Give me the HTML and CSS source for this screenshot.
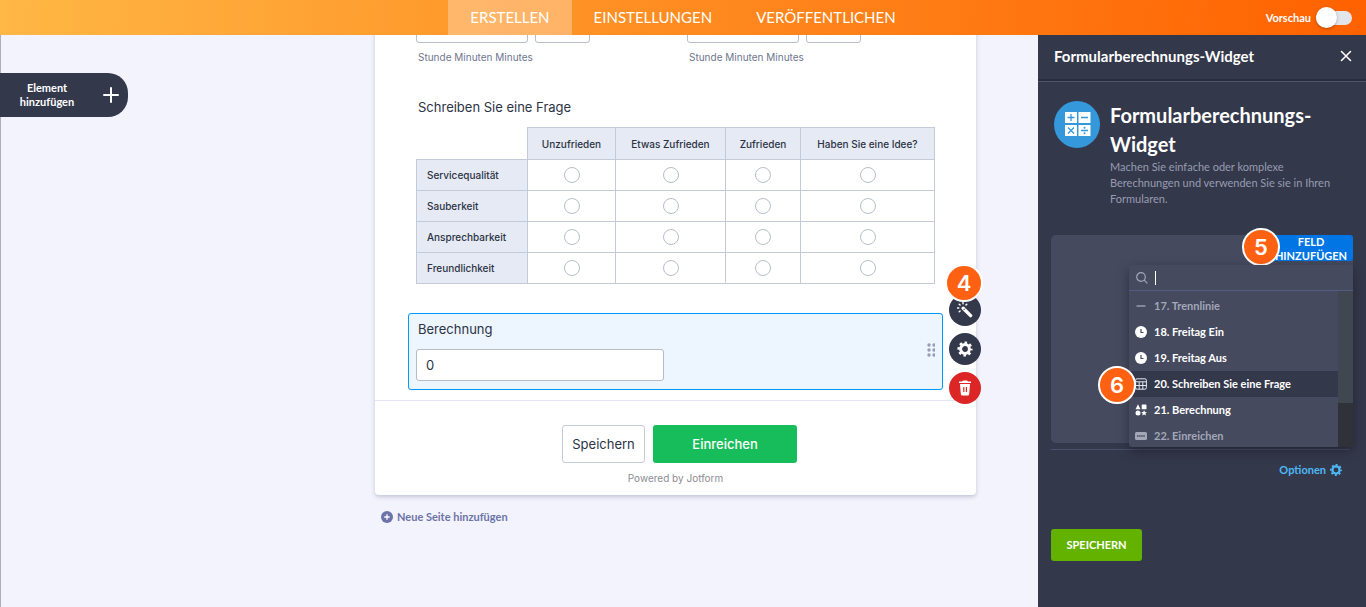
FILE: index.html
```html
<!DOCTYPE html>
<html lang="de">
<head>
    <meta charset="UTF-8">
    <meta name="viewport" content="width=device-width, initial-scale=1.0">
    <title>Formularberechnungs-Widget</title>
    <link rel="stylesheet" href="styles.css">
</head>
<body>
    <header class="topbar">
        <nav class="tabs">
            <a class="tab active" href="#">ERSTELLEN</a>
            <a class="tab" href="#">EINSTELLUNGEN</a>
            <a class="tab" href="#">VERÖFFENTLICHEN</a>
        </nav>
        <div class="preview">
            <label for="preview">Vorschau</label>
            <input type="checkbox" id="preview" class="switch">
        </div>
    </header>

    <div class="main">
        <main class="workspace">
            <button class="add-element">
                <span>Element hinzufügen</span>
                <svg width="16" height="16" viewBox="0 0 16 16"><path d="M8 1v14M1 8h14" stroke="#fff" stroke-width="2" stroke-linecap="round"/></svg>
            </button>

            <div class="column">
                <form class="form" onsubmit="return false">
                    <div class="fields">
                        <div class="times">
                            <div class="time">
                                <div class="time-inputs">
                                    <input type="text" id="time1" class="box hours">
                                    <input type="text" class="box minutes" aria-label="Minuten">
                                </div>
                                <label for="time1">Stunde Minuten Minutes</label>
                            </div>
                            <div class="time">
                                <div class="time-inputs">
                                    <input type="text" id="time2" class="box hours">
                                    <input type="text" class="box minutes" aria-label="Minuten">
                                </div>
                                <label for="time2">Stunde Minuten Minutes</label>
                            </div>
                        </div>

                        <div class="question">Schreiben Sie eine Frage</div>
                        <table class="matrix">
                            <thead>
                                <tr>
                                    <td class="row-name"></td>
                                    <th class="col-a">Unzufrieden</th>
                                    <th class="col-b">Etwas Zufrieden</th>
                                    <th class="col-c">Zufrieden</th>
                                    <th>Haben Sie eine Idee?</th>
                                </tr>
                            </thead>
                            <tbody>
                                <tr>
                                    <th>Servicequalität</th>
                                    <td><input type="radio" name="r1" aria-label="Unzufrieden"></td>
                                    <td><input type="radio" name="r1" aria-label="Etwas Zufrieden"></td>
                                    <td><input type="radio" name="r1" aria-label="Zufrieden"></td>
                                    <td><input type="radio" name="r1" aria-label="Haben Sie eine Idee?"></td>
                                </tr>
                                <tr>
                                    <th>Sauberkeit</th>
                                    <td><input type="radio" name="r2" aria-label="Unzufrieden"></td>
                                    <td><input type="radio" name="r2" aria-label="Etwas Zufrieden"></td>
                                    <td><input type="radio" name="r2" aria-label="Zufrieden"></td>
                                    <td><input type="radio" name="r2" aria-label="Haben Sie eine Idee?"></td>
                                </tr>
                                <tr>
                                    <th>Ansprechbarkeit</th>
                                    <td><input type="radio" name="r3" aria-label="Unzufrieden"></td>
                                    <td><input type="radio" name="r3" aria-label="Etwas Zufrieden"></td>
                                    <td><input type="radio" name="r3" aria-label="Zufrieden"></td>
                                    <td><input type="radio" name="r3" aria-label="Haben Sie eine Idee?"></td>
                                </tr>
                                <tr>
                                    <th>Freundlichkeit</th>
                                    <td><input type="radio" name="r4" aria-label="Unzufrieden"></td>
                                    <td><input type="radio" name="r4" aria-label="Etwas Zufrieden"></td>
                                    <td><input type="radio" name="r4" aria-label="Zufrieden"></td>
                                    <td><input type="radio" name="r4" aria-label="Haben Sie eine Idee?"></td>
                                </tr>
                            </tbody>
                        </table>
                    </div>

                    <div class="calc">
                        <div class="calc-field">
                            <label for="calc">Berechnung</label>
                            <input type="text" id="calc" class="box" value="0">
                        </div>
                        <svg class="grip" width="8" height="14" viewBox="0 0 8 14" fill="#979db5"><circle cx="2" cy="2" r="1.7"/><circle cx="7" cy="2" r="1.7"/><circle cx="2" cy="7" r="1.7"/><circle cx="7" cy="7" r="1.7"/><circle cx="2" cy="12" r="1.7"/><circle cx="7" cy="12" r="1.7"/></svg>
                        <div class="actions">
                            <span class="badge">4</span>
                            <button class="action" aria-label="Assistent">
                                <svg width="16" height="16" viewBox="0 0 16 16"><path d="M6.2 6.2L13.6 13.6" stroke="#fff" stroke-width="3.4" stroke-linecap="round"/><path d="M6.6 8L8 6.6" stroke="#34384b" stroke-width="1"/><path d="M6 .6v1.2M2.2 2.2l.9.9M.6 6h1.2M2.2 9.8l.9-.9M9.8 2.2l-.9.9" stroke="#fff" stroke-width="1.4" stroke-linecap="round"/></svg>
                            </button>
                            <button class="action" aria-label="Einstellungen">
                                <svg width="16" height="16" viewBox="0 0 16 16"><g fill="none" stroke="#fff"><circle cx="8" cy="8" r="4.4" stroke-width="3"/><circle cx="8" cy="8" r="6.4" stroke-width="2.4" stroke-dasharray="2.5 2.53" stroke-dashoffset="1.25"/></g></svg>
                            </button>
                            <button class="action delete" aria-label="Löschen">
                                <svg width="16" height="16" viewBox="0 0 16 16"><path fill="#fff" fill-rule="evenodd" d="M6 .5h4l1 1h3V3H2V1.500h3zM3 4h10l-.8 10a1.500 1.500 0 0 1-1.500 1.500H5.300A1.500 1.500 0 0 1 3.800 14zM6.200 7v5h1.200V7zM8.800 7v5H10V7z"/></svg>
                            </button>
                        </div>
                    </div>

                    <div class="submit">
                        <div class="submit-buttons">
                            <button class="save">Speichern</button>
                            <button class="send">Einreichen</button>
                        </div>
                        <div class="powered">Powered by Jotform</div>
                    </div>
                </form>
                <button class="new-page">
                    <svg width="12" height="12" viewBox="0 0 12 12"><circle cx="6" cy="6" r="6" fill="#6c73a8"/><path d="M6 3.300v5.400M3.300 6h5.400" stroke="#fff" stroke-width="1.300"/></svg>
                    Neue Seite hinzufügen
                </button>
            </div>
        </main>

        <aside class="panel">
            <div class="panel-head">
                <span>Formularberechnungs-Widget</span>
                <button class="close" aria-label="Schließen"><svg width="12" height="12" viewBox="0 0 12 12"><path d="M1.500 1.500l9 9M10.500 1.500l-9 9" stroke="#fff" stroke-width="1.600" stroke-linecap="round"/></svg></button>
            </div>

            <div class="intro">
                <svg class="logo" width="46" height="47" viewBox="0 0 46 47">
                    <ellipse cx="23" cy="23.500" rx="23" ry="23.500" fill="#3498db"/>
                    <path fill="#fff" d="M11 11h12v11H11zM24.500 11h12v11h-12zM11 24h12v11H11zM24.500 24h12v11h-12z"/>
                    <path d="M13.500 16.500h7M17 13v7M27 16.500h7M14 26.500l6 6M20 26.500l-6 6M27 29.500h7" stroke="#3498db" stroke-width="1.300"/>
                    <circle cx="30.500" cy="26.800" r="1" fill="#3498db"/><circle cx="30.500" cy="32.200" r="1" fill="#3498db"/>
                </svg>
                <div>
                    <h2>Formularberechnungs-Widget</h2>
                    <p>Machen Sie einfache oder komplexe Berechnungen und verwenden Sie sie in Ihren Formularen.</p>
                </div>
            </div>

            <div class="editor">
                <button class="add-field">FELD HINZUFÜGEN</button>
                <span class="badge badge-five">5</span>
                <div class="menu">
                    <div class="search">
                        <svg width="12" height="12" viewBox="0 0 12 12" fill="none" stroke="#a3a7b8" stroke-width="1.200"><circle cx="5" cy="5" r="4.300"/><path d="M8.200 8.200l3.200 3.200"/></svg>
                        <span class="caret"></span>
                        <input type="text" aria-label="Suche">
                    </div>
                    <div class="menu-body">
                        <div class="items">
                            <button class="item muted"><svg width="12" height="12" viewBox="0 0 12 12"><path d="M1.500 6h9" stroke="#a3a7b8" stroke-width="1.300"/></svg>17. Trennlinie</button>
                            <button class="item"><svg width="12" height="12" viewBox="0 0 12 12"><circle cx="6" cy="6" r="6" fill="#fff"/><path d="M6 3v3.500h2.500" fill="none" stroke="#454a5e" stroke-width="1.200"/></svg>18. Freitag Ein</button>
                            <button class="item"><svg width="12" height="12" viewBox="0 0 12 12"><circle cx="6" cy="6" r="6" fill="#fff"/><path d="M6 3v3.500h2.500" fill="none" stroke="#454a5e" stroke-width="1.200"/></svg>19. Freitag Aus</button>
                            <button class="item current"><svg width="12" height="12" viewBox="0 0 12 12" fill="none" stroke="#e4e6ef" stroke-width="1"><rect x=".6" y=".8" width="10.800" height="10.400" rx="1.500"/><path d="M.6 3.800h10.800M.6 7.500h10.800M4.200 3.800v7.400M7.800 3.800v7.400"/></svg>20. Schreiben Sie eine Frage</button>
                            <button class="item"><svg width="12" height="12" viewBox="0 0 12 12" fill="#fff"><path d="M3 .3L5.500 5.300H.5z"/><rect x="6.700" y=".5" width="4.800" height="4.800" rx=".6"/><circle cx="3" cy="9" r="2.500"/><path d="M9.100 6.300l.9 1.700 1.900.3-1.400 1.300.4 2-1.800-1-1.800 1 .4-2-1.400-1.300 1.900-.3z"/></svg>21. Berechnung</button>
                            <button class="item muted"><svg width="12" height="12" viewBox="0 0 12 12"><rect y="2" width="12" height="8" rx="1.500" fill="#a3a7b8"/><path d="M2 6h8" stroke="#5c6175" stroke-width="2" stroke-dasharray="1.500 .6"/></svg>22. Einreichen</button>
                        </div>
                        <div class="scroll"><div class="thumb"></div></div>
                    </div>
                    <span class="badge badge-six">6</span>
                </div>
            </div>

            <div class="options">
                <a href="#">Optionen
                    <svg width="12" height="12" viewBox="0 0 16 16"><g fill="none" stroke="#4cb8f6"><circle cx="8" cy="8" r="4.800" stroke-width="3"/><circle cx="8" cy="8" r="6.800" stroke-width="2.400" stroke-dasharray="2.670 2.670" stroke-dashoffset="1.330"/></g></svg>
                </a>
            </div>

            <button class="panel-save">SPEICHERN</button>
        </aside>
    </div>
</body>
</html>
```
FILE: styles.css
```css
*{
    box-sizing: border-box;
}
body{
    margin: 0;
    height: 100vh;
    display: flex;
    flex-direction: column;
    overflow: hidden;
    font-family: Lato, sans-serif;
    color: #2c3345;
}
button, input{
    font-family: inherit;
    margin: 0;
}
button{
    border: none;
    padding: 0;
    cursor: pointer;
}
svg{
    display: block;
    flex: none;
}

/* top bar */
.topbar{
    display: grid;
    grid-template-columns: 1fr auto 1fr;
    height: 35px;
    background: linear-gradient(95deg, #ffb745, #ff9427 40%, #ff6100);
}
.tabs{
    grid-column: 2;
    display: flex;
}
.tab{
    display: flex;
    align-items: center;
    padding: 0 22px 2px;
    font-size: 15px;
    color: #fff;
    text-decoration: none;
}
.tab.active{
    background: rgba(255, 255, 255, 0.3);
}
.preview{
    display: flex;
    align-items: center;
    justify-content: flex-end;
    gap: 5px;
    padding-right: 14px;
    font-size: 11px;
    font-weight: bold;
    color: #fff;
}
.switch{
    appearance: none;
    display: flex;
    align-items: center;
    width: 36px;
    height: 14px;
    border-radius: 7px;
    background: #e3e5ed;
}
.switch::before{
    content: "";
    width: 21px;
    height: 21px;
    border-radius: 50%;
    background: #fff;
    box-shadow: 0 1px 3px rgba(0, 0, 0, 0.3);
}

.main{
    flex: 1;
    min-height: 0;
    display: flex;
}

/* form builder */
.workspace{
    position: relative;
    flex: 1;
    overflow: hidden;
    padding-right: 62px;
    background: #f3f3fe;
    box-shadow: inset 1px 0 0 #aeaebd;
}
.add-element{
    position: absolute;
    left: 0;
    top: 38px;
    display: flex;
    align-items: center;
    justify-content: space-between;
    width: 128px;
    height: 44px;
    padding: 0 9px 0 12px;
    border-radius: 0 20px 20px 0;
    background: #34384b;
    color: #fff;
    font-size: 11px;
    font-weight: bold;
    line-height: 14px;
}
.add-element span{
    width: 70px;
}
.column{
    width: 601px;
    margin-left: auto;
    margin-top: -24px;
}
.form{
    background: #fff;
    border-radius: 4px;
    box-shadow: 0 2px 4px rgba(84, 95, 111, 0.3);
    font-family: Inter, sans-serif;
}
.fields{
    padding: 0 41px;
}
.times{
    display: flex;
}
.time{
    flex: none;
    width: 271px;
    font-size: 10px;
    line-height: 16px;
    color: #6f7690;
}
.time label{
    display: block;
    margin: 6px 2px 0;
}
.time-inputs{
    display: flex;
    gap: 7px;
}
.box{
    height: 32px;
    border: 1px solid #b8bdc9;
    border-radius: 3px;
    background: #fff;
    padding: 0 9px;
    font-size: 13px;
    color: #2c3345;
}
.hours{
    width: 112px;
}
.minutes{
    width: 55px;
}
.question{
    margin: 32px 2px 10px;
    font-size: 13px;
    line-height: 20px;
}
.matrix{
    width: 100%;
    table-layout: fixed;
    border-collapse: collapse;
    font-size: 10px;
}
.matrix th, .matrix td{
    height: 31px;
    padding: 0;
    border: 1px solid #c3cad8;
    text-align: center;
}
.matrix th{
    background: #e5eaf4;
    font-weight: 500;
}
.matrix thead th{
    height: 32px;
}
.matrix tbody th{
    text-align: left;
    padding-left: 10px;
}
.matrix .row-name{
    width: 111px;
    border: none;
}
.col-a{
    width: 88px;
}
.col-b{
    width: 110px;
}
.col-c{
    width: 75px;
}
.matrix input{
    appearance: none;
    display: block;
    width: 16px;
    height: 16px;
    margin: 0 auto;
    border: 1px solid #b8bdc9;
    border-radius: 50%;
    background: #fff;
}
.calc{
    position: relative;
    display: flex;
    align-items: center;
    justify-content: space-between;
    margin: 29px 33px 10px;
    padding: 5px 7px 8px;
    border: 1px solid #0099ff;
    border-radius: 3px;
    background: #edf5ff;
}
.calc-field{
    display: flex;
    flex-direction: column;
    gap: 10px;
    font-size: 13px;
    line-height: 20px;
}
.calc-field label{
    padding-left: 2px;
}
.calc-field .box{
    width: 248px;
}
.actions{
    position: absolute;
    top: -20px;
    right: -39px;
    display: flex;
    flex-direction: column;
    gap: 7px;
}
.action{
    display: flex;
    align-items: center;
    justify-content: center;
    width: 32px;
    height: 32px;
    border-radius: 50%;
    background: #34384b;
}
.delete{
    background: #dc2626;
}
.badge{
    position: absolute;
    left: -4px;
    top: -30px;
    width: 38px;
    height: 38px;
    border: 2px solid #fff;
    border-radius: 50%;
    background: #ff6112;
    color: #fff;
    font-family: Inter, sans-serif;
    font-size: 22px;
    font-weight: 600;
    line-height: 34px;
    text-align: center;
}
.submit{
    border-top: 1px solid #e3e5f5;
    padding: 24px 0 8px;
    text-align: center;
}
.submit-buttons{
    display: flex;
    justify-content: center;
    gap: 8px;
    padding-left: 8px;
}
.submit-buttons button{
    height: 38px;
    border-radius: 3px;
    font-size: 13px;
}
.save{
    width: 83px;
    border: 1px solid #c3cad8;
    background: #fff;
    color: #2c3345;
}
.send{
    width: 144px;
    background: #18bd5b;
    color: #fff;
    font-weight: 500;
}
.powered{
    margin-top: 7px;
    font-size: 10px;
    line-height: 17px;
    color: #8d8d94;
}
.new-page{
    display: flex;
    align-items: center;
    gap: 4px;
    margin: 15px 6px;
    background: none;
    color: #6c73a8;
    font-size: 11px;
    font-weight: bold;
}

/* settings panel */
.panel{
    flex: none;
    width: 328px;
    background: #34384b;
    color: #fff;
}
.panel-head{
    display: flex;
    align-items: center;
    justify-content: space-between;
    height: 46px;
    padding: 0 14px 2px 16px;
    border-bottom: 2px solid #2a2d3d;
    box-shadow: 0 1px 0 #4f5468;
    font-size: 15px;
    font-weight: bold;
}
.close{
    background: none;
}
.intro{
    display: flex;
    gap: 10px;
    padding: 20px 16px 0;
}
.intro h2{
    margin: 0;
    font-size: 20px;
    line-height: 29px;
}
.intro p{
    margin: 0;
    font-size: 11px;
    line-height: 16px;
    color: #989cb0;
}
.editor{
    position: relative;
    display: flex;
    justify-content: flex-end;
    align-items: flex-start;
    height: 208px;
    margin: 28px 13px 0;
    border-radius: 5px;
    background: #454a5e;
}
.add-field{
    width: 84px;
    height: 26px;
    border-radius: 3px;
    background: #0075e3;
    color: #fff;
    font-size: 11px;
    font-weight: bold;
    line-height: 14px;
}
.badge-five{
    left: 191px;
    top: -7px;
}
.badge-six{
    left: -31px;
    top: 101px;
}
.menu{
    position: absolute;
    top: 30px;
    right: 0;
    width: 224px;
    height: 182px;
    border-radius: 3px;
    background: #454a5e;
    box-shadow: 0 4px 12px rgba(0, 0, 0, 0.35);
}
.search{
    display: flex;
    align-items: center;
    height: 26px;
    padding: 0 7px;
    border-bottom: 1px solid #525b80;
}
.caret{
    width: 1px;
    height: 14px;
    margin-left: 7px;
    background: #fff;
}
.search input{
    flex: 1;
    min-width: 0;
    border: none;
    outline: none;
    background: none;
    color: #fff;
}
.menu-body{
    display: flex;
    height: 156px;
    overflow: hidden;
}
.items{
    flex: 1;
    padding-top: 2px;
}
.item{
    display: flex;
    align-items: center;
    gap: 7px;
    width: 100%;
    height: 26px;
    padding: 0 0 1px 6px;
    background: none;
    color: #fff;
    font-size: 11px;
    font-weight: bold;
}
.current{
    background: #34384b;
}
.muted{
    color: #a3a7b8;
}
.scroll{
    width: 15px;
    background: #2f3339;
}
.thumb{
    height: 112px;
    background: #414750;
}
.options{
    display: flex;
    justify-content: flex-end;
    margin: 6px 17px 0 13px;
    padding: 13px 7px 0 0;
    border-top: 1px solid #4a5070;
}
.options a{
    display: flex;
    align-items: center;
    gap: 4px;
    color: #4cb8f6;
    font-size: 11px;
    font-weight: bold;
    text-decoration: none;
}
.panel-save{
    width: 91px;
    height: 32px;
    margin: 53px 13px 0;
    padding-bottom: 2px;
    border-radius: 3px;
    background: #64b200;
    color: #fff;
    font-size: 11px;
    font-weight: bold;
}
```
